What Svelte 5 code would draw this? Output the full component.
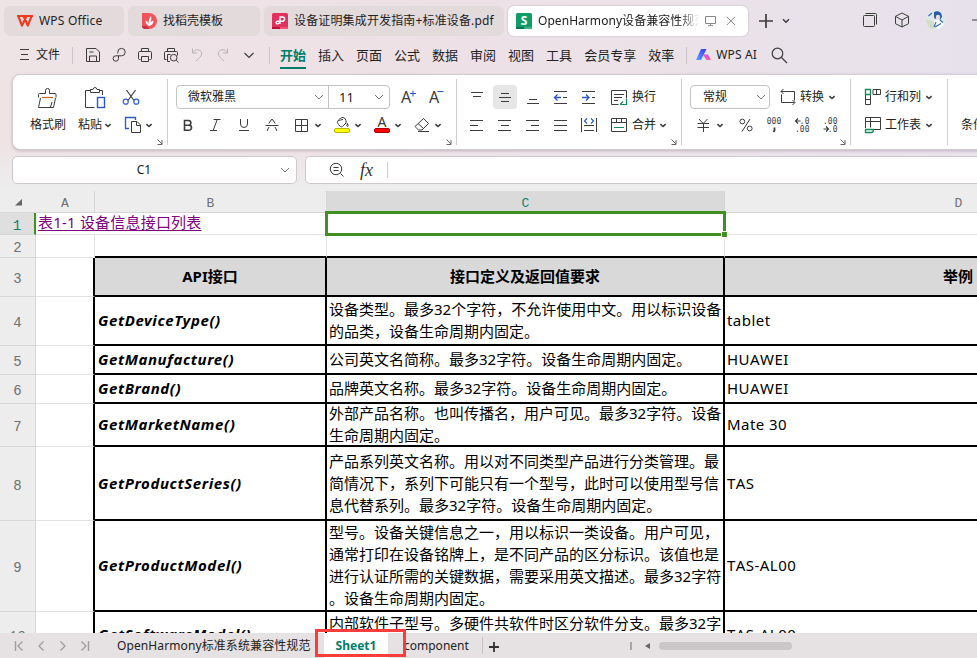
<script>
  const menus = ['插入', '页面', '公式', '数据', '审阅', '视图', '工具', '会员专享', '效率'];

  const rows = [
    { n: 4, api: 'GetDeviceType()', def: ['设备类型。最多32个字符，不允许使用中文。用以标识设备', '的品类，设备生命周期内固定。'], ex: 'tablet' },
    { n: 5, api: 'GetManufacture()', def: ['公司英文名简称。最多32字符。设备生命周期内固定。'], ex: 'HUAWEI' },
    { n: 6, api: 'GetBrand()', def: ['品牌英文名称。最多32字符。设备生命周期内固定。'], ex: 'HUAWEI' },
    { n: 7, api: 'GetMarketName()', def: ['外部产品名称。也叫传播名，用户可见。最多32字符。设备', '生命周期内固定。'], ex: 'Mate 30' },
    { n: 8, api: 'GetProductSeries()', def: ['产品系列英文名称。用以对不同类型产品进行分类管理。最', '简情况下，系列下可能只有一个型号，此时可以使用型号信', '息代替系列。最多32字符。设备生命周期内固定。'], ex: 'TAS' },
    { n: 9, api: 'GetProductModel()', def: ['型号。设备关键信息之一，用以标识一类设备。用户可见，', '通常打印在设备铭牌上，是不同产品的区分标识。该值也是', '进行认证所需的关键数据，需要采用英文描述。最多32字符', '。设备生命周期内固定。'], ex: 'TAS-AL00' },
    { n: 10, api: 'GetSoftwareModel()', def: ['内部软件子型号。多硬件共软件时区分软件分支。最多32字', ''], ex: 'TAS-AL00' }
  ];
</script>

{#snippet chev()}
  <svg class="chev" width="12" height="24" viewBox="0 0 12 24"><path d="M3.4 11.2 6 13.5 8.6 11.2" stroke-width="1.6" /></svg>
{/snippet}

{#snippet drop()}
  <svg class="drop" width="12" height="12" viewBox="0 0 12 12"><path d="M2 4 6 8 10 4" /></svg>
{/snippet}

{#snippet launcher()}
  <svg class="launcher" width="8" height="8" viewBox="0 0 8 8"><path d="M1.5 1.5 6 6M6 2v4.5H1.5" /></svg>
{/snippet}

<div class="app">
  <header class="titlebar">
    <div class="tab t1">
      <svg width="16" height="13" viewBox="0 0 16 13"><path d="M0 1h16M1.2 1 5 10.6 9.4 1.2M6.6 1.2 10.8 10.6 14.6 1" stroke="#f0391f" stroke-width="2.1" stroke-linejoin="round" /></svg>
      <span class="w1">WPS Office</span>
    </div>
    <div class="tab t2">
      <svg width="15" height="16" viewBox="0 0 15 16"><path d="M0 0h7a8 8 0 0 1 0 16H2l-2-2z" fill="#f0545a" stroke="none" /><path d="M0 13h5l2 3H2l-2-2z" fill="#c92f3e" stroke="none" /><path d="M7 13C4 11.500 3.600 9.500 3.600 7.500 5.500 8.500 6 9.500 6.600 11 6.400 8 7 5.500 9 3c.7 2.200.3 4-.6 6.500C9.500 8.500 10.200 8 11.600 7.800 11.300 10.500 10 12.500 7 13z" fill="#fff" stroke="none" /></svg>
      <span>找稻壳模板</span>
    </div>
    <div class="tab t3">
      <svg width="16" height="16" viewBox="0 0 16 16"><rect width="16" height="16" rx="1.5" fill="#e2315c" stroke="none" /><path d="M0 14h8v2H0z" fill="#c00f3e" stroke="none" /><path d="M8 14h8v2H8z" fill="#f64f78" stroke="none" /><path d="M8 11V4h2.500a2.100 2.100 0 0 1 0 4.200H5.500a1.400 1.400 0 1 0 1.400 1.400" stroke="#fff" stroke-width="1.4" /></svg>
      <span class="w3">设备证明集成开发指南+标准设备.pdf</span>
    </div>
    <div class="tab t4">
      <svg width="16" height="16" viewBox="0 0 16 16"><rect width="16" height="16" rx="1.5" fill="#109c66" stroke="none" /><path d="M0 14h8v2H0z" fill="#06784b" stroke="none" /><path d="M8 14h8v2H8z" fill="#39b584" stroke="none" /><text x="8" y="11.700" text-anchor="middle" class="s-logo">S</text></svg>
      <span class="w4">OpenHarmony设备兼容性规范</span>
      <svg class="gray" width="14" height="12" viewBox="0 0 14 12"><path d="M1.500 1.500h10v7h-10zM4 10.700h5M6.500 8.500v2" /></svg>
      <svg class="gray close" width="10" height="10" viewBox="0 0 10 10"><path d="M.8.8 9 9M9 .8.8 9" /></svg>
    </div>
    <svg class="plus" width="14" height="14" viewBox="0 0 14 14"><path d="M7 0v14M0 7h14" stroke-width="1.7" /></svg>
    <svg class="tabmenu" width="8" height="6" viewBox="0 0 8 6"><path d="M1 1.200 4 4.200 7 1.200" stroke-width="1.5" /></svg>
    <div class="winbtns">
      <svg width="16" height="16" viewBox="0 0 16 16"><rect x="1.500" y="3.500" width="11" height="11" rx="1" /><path d="M3.500 1.500h10a1 1 0 0 1 1 1v10" /></svg>
      <svg width="16" height="16" viewBox="0 0 16 16"><path d="M8 1 14.500 4.300v7.400L8 15 1.500 11.700V4.300zM1.700 4.500 8 8l6.300-3.500M8 8v7" /></svg>
      <svg width="20" height="20" viewBox="0 0 20 20"><circle cx="10" cy="10" r="10" fill="#dfe9ec" stroke="none" /><path d="M.3 9a9.800 9.800 0 0 0 7 10.500l2-7z" fill="#d3dcc4" stroke="none" /><path d="M8 2c4-2 8 0 8 5l-2 3-1-3-4 2-1-2z" fill="#2b5ca5" stroke="none" /><circle cx="12" cy="7" r="2.200" fill="#f0dfd8" stroke="none" /><path d="M8 11l4-1 5 2 1 3-5 4-5-2z" fill="#fafcff" stroke="none" /><path d="M2.500 6 6 3M9 17l6-3.500M14 10l3 2.500M10 12l-2 5" stroke="#3d6fae" stroke-width="1.2" /></svg>
    </div>
    <svg class="min" width="5" height="2" viewBox="0 0 5 2"><path d="M0 1h5" /></svg>
  </header>

  <nav class="menubar">
    <svg class="burger" width="10" height="12" viewBox="0 0 10 12"><path d="M0 .5h9M1 5.500h7M0 10.500h9" /></svg>
    <span class="file">文件</span>
    <i class="vsep s1"></i>
    <div class="quick">
      <svg width="16" height="16" viewBox="0 0 16 16"><path d="M14.500 14.500h-13v-13h9.500l3.500 3.500zM4.500 14v-5h7v5M4.500 5h4" /></svg>
      <svg width="16" height="16" viewBox="0 0 16 16"><path d="M7.500 11.500a2.700 2.700 0 1 1-2.700-2.700h5.700a3.700 3.700 0 1 0-3.700-3.700v1.400M7.500 11.500V9" /></svg>
      <svg width="16" height="16" viewBox="0 0 16 16"><path d="M4.500 4.500v-3h7v3M3.500 12.500h-1a1 1 0 0 1-1-1v-6a1 1 0 0 1 1-1h11a1 1 0 0 1 1 1v6a1 1 0 0 1-1 1h-1M4.500 9.500h7v5h-7z" /></svg>
      <svg width="16" height="16" viewBox="0 0 16 16"><path d="M4.500 4.500v-3h7v3M3.500 12.500h-2v-7a1 1 0 0 1 1-1h11a1 1 0 0 1 1 1v3M4.500 14.500v-7h3M7 14.500H4.500M13.200 13.200l2.300 2.300" /><circle cx="10.700" cy="10.700" r="3.300" /></svg>
      <svg class="faint" width="16" height="16" viewBox="0 0 16 16"><path d="M3.500 1.500v4.500H8M3.500 6C5.500 2 10 2 12 4.500c2 3-1 6-5 9.500" /></svg>
      <svg class="faint" width="16" height="16" viewBox="0 0 16 16"><path d="M12.500 1.500v4.500H8M12.500 6C10.500 2 6 2 4 4.500c-2 3 1 6 5 9.500" /></svg>
      <svg width="16" height="16" viewBox="0 0 16 16"><path d="M3.500 6 8 10.500l4.500-4.500" stroke-width="1.200" /></svg>
    </div>
    <i class="vsep s2"></i>
    <div class="menus">
      <span class="on">开始</span>
      {#each menus as m}<span>{m}</span>{/each}
    </div>
    <i class="vsep s3"></i>
    <svg class="ai" width="15" height="12" viewBox="0 0 15 12">
      <defs>
        <linearGradient id="aiBlue" x1="0" y1="1" x2="1" y2="0"><stop offset="0" stop-color="#4ea8ff" /><stop offset="1" stop-color="#3a35f5" /></linearGradient>
        <linearGradient id="aiPink" x1="0" y1="0" x2="1" y2="1"><stop offset="0" stop-color="#d04bf5" /><stop offset="1" stop-color="#ff5f90" /></linearGradient>
      </defs>
      <path d="M0 11 5 0h5.500L5 11z" fill="url(#aiBlue)" stroke="none" /><path d="M7 5.500h5l3 5.500h-4.500z" fill="url(#aiPink)" stroke="none" />
    </svg>
    <span class="aitext">WPS AI</span>
    <svg class="find" width="17" height="17" viewBox="0 0 17 17"><circle cx="6.500" cy="6.500" r="5.300" stroke-width="1.2" /><path d="M10.500 10.500 16 16" stroke-width="1.200" /></svg>
  </nav>

  <section class="ribbon">
    <div class="group g1">
      <div class="row clip-a">
        <svg width="24" height="24" viewBox="0 0 24 24"><path d="M5.500 13l-2 9.500h15l2-9.500M3.500 12.500V9.500q0-1 1-1h6V5.500a2 2 0 0 1 4 0v3h5.500q1 0 1 1v3M15.500 22l1.500-5" /><path d="M7 12.500h11" stroke="#c8641e" stroke-width="1.200" /></svg>
        <svg width="24" height="24" viewBox="0 0 24 24"><path d="M7 5.500H2.500v17h9M17 5.500h2.500V10M7.500 7.500v-3H10q.3-2 2-2t2 2h2.500v3z" /><rect x="14.500" y="12.500" width="7" height="10" stroke="#2b57c9" stroke-width="1.400" /></svg>
        <svg width="24" height="24" viewBox="0 0 24 24"><path d="M7.500 5 15 15.500M16.500 5 9 15.500" stroke-width="1.200" /><circle cx="6.700" cy="16.700" r="2.500" stroke="#2f5fe0" stroke-width="1.200" /><circle cx="17.300" cy="16.700" r="2.500" stroke="#2f5fe0" stroke-width="1.200" /></svg>
      </div>
      <div class="row clip-b">
        <span>格式刷</span><span>粘贴</span>{@render chev()}
        <svg width="24" height="24" viewBox="0 0 24 24"><path d="M8 15.500H4.500v-11h10V7" stroke="#2b57c9" stroke-width="1.300" /><path d="M10.500 8.500h5.500l3.500 3.500v7.500h-9zM15.500 8.500v4h4" /></svg>
        {@render chev()}
      </div>
      {@render launcher()}
    </div>

    <div class="group g2">
      <div class="row font-a">
        <div class="select">
          <span class="family">微软雅黑</span>{@render drop()}
          <span class="size">11</span>{@render drop()}
        </div>
        <svg width="24" height="24" viewBox="0 0 24 24"><text x="9" y="18" class="aa" text-anchor="middle">A</text><path d="M13 8.500h6M16 5.500v6" stroke="#2b57c9" /></svg>
        <svg width="24" height="24" viewBox="0 0 24 24"><text x="9" y="18" class="aa" text-anchor="middle">A</text><path d="M12.500 6.500h6" stroke="#2b57c9" /></svg>
      </div>
      <div class="row font-b">
        <svg width="24" height="24" viewBox="0 0 24 24"><path d="M8.500 7.500h4a2.300 2.300 0 0 1 0 4.700h-4zM8.500 12.200h4.500a2.500 2.500 0 0 1 0 5h-4.500z" stroke-width="1.600" /></svg>
        <svg width="24" height="24" viewBox="0 0 24 24"><path d="M10.500 6.500h7M7 17.500h7M14.200 6.500l-4 11" /></svg>
        <svg width="24" height="24" viewBox="0 0 24 24"><path d="M8.500 6v5q0 3.500 3.500 3.500t3.500-3.500V6M7 17.500h10" /></svg>
        <svg width="24" height="24" viewBox="0 0 24 24"><path d="M8.700 10.500 12 6l3.300 4.500M5.500 12.500h13M9 14l-2 4M15 14l2 4" /></svg>
        <svg width="24" height="24" viewBox="0 0 24 24"><path d="M5.500 6.500h12v12h-12zM11.500 6.500v12M5.500 12.500h12" /></svg>
        {@render chev()}
        <svg width="24" height="24" viewBox="0 0 24 24"><path d="M9 6.500q1-2 4-2 2.500.5 3 3v3M13 6.500l-5 1q-1.500 2 .5 4l2 2q1 .8 2 0l3.500-3.500M17.500 10.500q-1.500 3 0 3 1.500 0 0-3" /><rect x="4.500" y="15.500" width="15" height="4" rx="1.500" fill="#ff0" stroke="#b8b800" /></svg>
        {@render chev()}
        <svg width="24" height="24" viewBox="0 0 24 24"><text x="12" y="13.500" class="aa small" text-anchor="middle">A</text><rect x="4.500" y="15.500" width="15" height="4" rx="1.500" fill="#f00" stroke="#b00000" /></svg>
        {@render chev()}
        <svg width="24" height="24" viewBox="0 0 24 24"><path d="M13.500 5.500 18.500 10.500l-6.500 6.500H8.500L5 13.500zM8 10.500l5.500 5M8 18.500h11" /></svg>
        {@render chev()}
      </div>
      {@render launcher()}
    </div>

    <div class="group g3">
      <div class="row align">
        <svg width="24" height="24" viewBox="0 0 24 24"><path d="M6 7.500h12M8 11.500h8" /></svg>
        <span class="pressed"><svg width="24" height="24" viewBox="0 0 24 24"><path d="M8 8.500h8M6 12.500h12M8 16.500h8" /></svg></span>
        <svg width="24" height="24" viewBox="0 0 24 24"><path d="M8 14.500h8M6 18.500h12" /></svg>
        <svg width="24" height="24" viewBox="0 0 24 24"><path d="M5 6.500h13M14 12.500h4M5 18.500h13" /><path d="M5.500 12.500h6.500M8.500 9.500l-3 3 3 3" stroke="#2b57c9" stroke-width="1.300" /></svg>
        <svg width="24" height="24" viewBox="0 0 24 24"><path d="M5 6.500h13M15 12.500h3M5 18.500h13" /><path d="M5 12.500h7M9 9.500l3 3-3 3" stroke="#2b57c9" stroke-width="1.300" /></svg>
        <svg width="24" height="24" viewBox="0 0 24 24"><path d="M11.500 19.500h-7v-14h15v8M7 9.500h10M7 12.500h8M7 15.500h4" /><path d="M19.500 14v5.500h-6M16 16.500l-3 3" stroke="#108a58" stroke-width="1.200" /></svg>
        <span>换行</span>
      </div>
      <div class="row align">
        <svg width="24" height="24" viewBox="0 0 24 24"><path d="M5 7.500h13M5 12.500h8M5 17.500h13" /></svg>
        <svg width="24" height="24" viewBox="0 0 24 24"><path d="M5 7.500h13M8 12.500h8M5 17.500h13" /></svg>
        <svg width="24" height="24" viewBox="0 0 24 24"><path d="M5 7.500h13M10 12.500h8M5 17.500h13" /></svg>
        <svg width="24" height="24" viewBox="0 0 24 24"><path d="M5 7.500h13M5 12.500h13M5 17.500h13" /></svg>
        <svg width="24" height="24" viewBox="0 0 24 24"><path d="M4.500 5v14M19.500 5v14M7 12.500h10M7 17.500h10" /><path d="M10 5.500 7.500 8l2.500 2.500M14 5.500 16.500 8 14 10.500" stroke="#2b57c9" stroke-width="1.200" /></svg>
        <svg width="24" height="24" viewBox="0 0 24 24"><path d="M4.500 5.500h15v13h-15zM4.500 9.500h15M9.500 5.500v4M14.500 5.500v4" /><path d="M7 14.500h10" stroke="#108a58" /></svg>
        <span>合并</span>{@render chev()}
      </div>
      {@render launcher()}
    </div>

    <div class="group g4">
      <div class="row num-a">
        <div class="select mini"><span>常规</span>{@render drop()}</div>
        <svg width="24" height="24" viewBox="0 0 24 24"><path d="M7.500 4 5 6.500 7.500 9M5 6.500h13.500v9M5.500 9.500V17.500h13M16.500 15l2.500 2.500-2.500 2.500" /></svg>
        <span>转换</span>{@render chev()}
      </div>
      <div class="row num-b">
        <svg width="24" height="24" viewBox="0 0 24 24"><path d="M8 6l4.200 4.500L16.500 6M6.500 10.500h11.500M6.500 14.500h11.500M12.500 10.500V19" /></svg>
        {@render chev()}
        <svg width="24" height="24" viewBox="0 0 24 24"><circle cx="8.300" cy="8.500" r="2.400" /><circle cx="15.700" cy="15.500" r="2.400" /><path d="M16 6 8 18.500" /></svg>
        <svg width="24" height="24" viewBox="0 0 24 24"><text x="12" y="10.500" class="num" text-anchor="middle">000</text><path d="M12.500 14.500v3l-1 1.500" stroke-width="1.800" /></svg>
        <svg width="24" height="24" viewBox="0 0 24 24"><text x="19.500" y="10.500" class="num" text-anchor="end">.0</text><text x="19.500" y="18.500" class="num" text-anchor="end">.00</text><path d="M5.500 8h5M8 5.500 5.500 8 8 10.500" stroke-width="1.200" /></svg>
        <svg width="24" height="24" viewBox="0 0 24 24"><text x="19.500" y="10.500" class="num" text-anchor="end">.00</text><text x="19.500" y="18.500" class="num" text-anchor="end">.0</text><path d="M5.500 16h5M8 13.500l2.500 2.500L8 18.500" stroke-width="1.200" /></svg>
      </div>
      {@render launcher()}
    </div>

    <div class="group g5">
      <div class="row cells">
        <svg width="24" height="24" viewBox="0 0 24 24"><path d="M12 4.500h7.500v5H12zM15.500 4.500v5M4.500 14.500h5v5h-5zM4.500 10v5M9.500 10v5" /><path d="M4.500 4.500h5v5h-5z" stroke="#108a58" stroke-width="1.300" /></svg>
        <span>行和列</span>{@render chev()}
      </div>
      <div class="row cells">
        <svg width="24" height="24" viewBox="0 0 24 24"><path d="M4.500 15V4.500h15v12H13M4.500 8.500h15M9.500 4.500v10" /><path d="M4.500 16.500h8q0 3.000-2 3h-6z" stroke="#108a58" stroke-width="1.300" /></svg>
        <span>工作表</span>{@render chev()}
      </div>
    </div>

    <div class="group g6">
      <div class="row"></div>
      <div class="row"><span>条件格式</span></div>
    </div>
  </section>

  <section class="formula">
    <div class="box name"><span>C1</span>{@render drop()}</div>
    <div class="box fx">
      <svg width="16" height="16" viewBox="0 0 16 16"><circle cx="7" cy="7" r="5.700" /><path d="M4.500 5.500h5M4.500 8.500h5M11.500 11.500 14.500 14.500" /></svg>
      <em>fx</em>
      <i></i>
    </div>
  </section>

  <section class="sheet">
    <div class="line heads">
      <div class="corner"><svg width="7" height="7" viewBox="0 0 7 7"><path d="M7 0v6.500H0z" fill="#666" stroke="none" /></svg></div>
      <div>A</div><div>B</div><div class="cur">C</div><div>D</div>
    </div>
    <div class="line r1">
      <div class="no cur">1</div><div class="linkcell"><a href="#list">表1-1 设备信息接口列表</a></div>
      <div class="c1"><div class="selection"><b></b></div></div><div></div>
    </div>
    <div class="line r2"><div class="no">2</div><div></div><div></div><div></div><div></div></div>
    <div class="line tbl th r3"><div class="no">3</div><div></div><div>API接口</div><div>接口定义及返回值要求</div><div>举例</div></div>
    {#each rows as r}
      <div class="line tbl r{r.n}">
        <div class="no">{r.n}</div><div></div>
        <div class="api">{r.api}</div>
        <div class="def">{#each r.def as l}<p>{l}</p>{/each}</div>
        <div class="ex">{r.ex}</div>
      </div>
    {/each}
  </section>

  <footer class="tabs">
    <div class="nav">
      <svg width="12" height="12" viewBox="0 0 12 12"><path d="M2.500 1v10M9.500 1.500 5 6l4.500 4.500" /></svg>
      <svg width="12" height="12" viewBox="0 0 12 12"><path d="M8.500 1.500 4 6l4.500 4.500" /></svg>
      <svg width="12" height="12" viewBox="0 0 12 12"><path d="M3.500 1.500 8 6l-4.500 4.500" /></svg>
      <svg width="12" height="12" viewBox="0 0 12 12"><path d="M9.500 1v10M2.500 1.500 7 6l-4.500 4.500" /></svg>
    </div>
    <span class="st first">OpenHarmony标准系统兼容性规范</span>
    <span class="st active">Sheet1<b class="mark"></b></span>
    <span class="st third">component</span>
    <svg class="add" width="10" height="10" viewBox="0 0 10 10"><path d="M5 0v10M0 5h10" stroke="#333" stroke-width="1.8" /></svg>
    <div class="scroll">
      <i></i>
      <svg width="5" height="6" viewBox="0 0 5 6"><path d="M5 0v6L0 3z" fill="#666" stroke="none" /></svg>
      <b></b>
    </div>
  </footer>
</div>

<style>
  :global(body) { margin: 0; overflow: hidden; }
  .app {
    width: 977px; height: 658px; overflow: hidden; display: flex; flex-direction: column;
    background: linear-gradient(180deg, transparent 150px, #ededed 188px), linear-gradient(90deg, #eee4e6 0, #eee1e6 40%, #ebe2e8 70%, #e7e1ec 100%);
    font: 12px/16px "Noto Sans", "Noto Sans CJK SC", sans-serif; color: #222;
  }
  svg { display: block; flex: none; fill: none; stroke: #3c3c3c; stroke-width: 1; }
  svg text { stroke: none; fill: #3c3c3c; }
  span { white-space: nowrap; }

  .titlebar { height: 37px; display: flex; align-items: flex-start; padding: 6px 0 0 4px; box-sizing: border-box; flex: none; }
  .tab { height: 30px; box-sizing: border-box; margin-right: 4px; border-radius: 6px; background: #e3dadc; display: flex; align-items: center; }
  .t1 { width: 120px; padding-left: 13px; gap: 6px; }
  .w1 { letter-spacing: .2px; }
  .t2 { width: 132px; padding-left: 14px; gap: 6px; }
  .t3 { width: 240px; padding-left: 8px; gap: 6px; }
  .w3 { letter-spacing: .15px; }
  .t4 { width: 240px; padding-left: 8px; gap: 6px; background: #fff; box-shadow: 0 0 2px #b9b0b4; }
  .w4 { width: 161px; overflow: hidden; letter-spacing: .05px; -webkit-mask-image: linear-gradient(90deg, #000 142px, transparent 161px); mask-image: linear-gradient(90deg, #000 142px, transparent 161px); }
  .s-logo { font: 700 12px "Noto Sans", sans-serif; fill: #fff; }
  .gray { stroke: #888; }
  .close { margin-left: 2px; }
  .t4 .gray { position: relative; left: -1px; }
  .plus { margin: 8px 0 0 7px; }
  .tabmenu { margin: 12px 0 0 9px; }
  .winbtns { display: flex; align-items: center; gap: 16px; margin: 4px 0 0 72px; }
  .min { margin: 13px 0 0 26px; }

  .menubar { height: 36px; display: flex; align-items: center; flex: none; }
  .burger { margin-left: 20px; }
  .file { margin-left: 6px; width: 24px; }
  .vsep { width: 1px; height: 17px; background: #cdc5c8; flex: none; }
  .s1 { margin-left: 12px; }
  .quick { display: flex; gap: 10px; margin-left: 12px; }
  .faint { stroke: #b9b2b5; }
  .s2 { margin-left: 12px; }
  .menus { display: flex; gap: 12px; margin-left: 10px; font-size: 13px; line-height: 20px; }
  .menus span { height: 25px; padding-top: 1px; box-sizing: border-box; margin-top: 3px; }
  .menus .on { color: #007e6b; font-weight: 700; border-bottom: 2px solid #007e6b; }
  .s3 { margin-left: 12px; }
  .ai { margin-left: 9px; }
  .aitext { margin-left: 5px; width: 42px; letter-spacing: .15px; }
  .find { margin-left: 13px; }

  .ribbon {
    height: 76px; box-sizing: border-box; margin: 1px 0 0 12px; width: 980px; flex: none; display: flex; padding-top: 4px;
    background: #fff; border: 1px solid #d3ccd0; border-radius: 8px 0 0 8px; box-shadow: 0 1px 3px rgba(90, 70, 90, .28);
  }
  .group { height: 66px; box-sizing: border-box; border-right: 1px solid #cecece; padding-top: 6px; display: flex; flex-direction: column; flex: none; }
  .g1 { width: 155px; } .g2 { width: 289px; } .g3 { width: 225px; } .g4 { width: 169px; } .g5 { width: 97px; }
  .g6 { border: 0; padding-left: 13px; }
  .row { display: grid; height: 24px; margin-bottom: 4px; align-items: center; flex: none; }
  .launcher { align-self: flex-end; margin: -3px 3px 0 0; stroke: #666; }
  .clip-a { padding-left: 22px; grid-template-columns: 48px 36px 24px; }
  .clip-b { padding-left: 17px; grid-template-columns: 48px 24px 19px 22px 12px; }
  .font-a { padding-left: 8px; grid-template-columns: 221px 28px 24px; }
  .font-b { padding-left: 8px; grid-template-columns: 27px 29px 28px 30px 22px 18px 22px 18px 22px 18px 22px 12px; }
  .align { padding-left: 8px; grid-template-columns: 28px 28px 28px 28px 30px 25px 25px 12px; }
  .num-a { padding-left: 8px; grid-template-columns: 86px 24px 26px 12px; }
  .num-b { padding-left: 9px; grid-template-columns: 23px 20px 28px 28px 28px 24px; }
  .cells { padding-left: 10px; grid-template-columns: 24px 38px 12px; }
  .pressed { width: 24px; height: 24px; background: #e6e6e6; border-radius: 4px; }
  .select { width: 214px; height: 24px; box-sizing: border-box; border: 1px solid #c3c3c3; border-radius: 4px; display: flex; align-items: center; padding-left: 11px; }
  .drop { stroke: #777; }
  .family { width: 125px; }
  .size { font-size: 13px; border-left: 1px solid #c3c3c3; line-height: 22px; margin-left: 3px; padding-left: 10px; width: 34px; }
  .mini { width: 80px; padding-left: 12px; }
  .mini span { width: 52px; }
  .aa { font: 16px "Noto Sans", sans-serif; }
  .small { font-size: 14px; }
  .num { font: 8px "DejaVu Sans Mono", monospace; }

  .formula { display: flex; gap: 8px; margin: 6px 0 0 12px; height: 28px; flex: none; }
  .box { box-sizing: border-box; height: 28px; background: #fff; border: 1px solid #cfc8cc; border-radius: 5px; display: flex; align-items: center; flex: none; }
  .name { width: 285px; padding-right: 5px; }
  .name span { flex: 1; text-align: center; padding-right: 4px; }
  .fx { width: 680px; border-right: 0; border-radius: 5px 0 0 5px; padding-left: 23px; }
  .fx em { font: italic 18px "Liberation Serif", serif; margin-left: 15px; width: 17px; color: #333; }
  .fx i { width: 1px; height: 16px; background: #ccc; margin-left: 10px; }

  .sheet { margin-top: 7px; height: 442px; flex: none; overflow: hidden; background: #fff; }
  .line { display: grid; grid-template-columns: 36px 59px 232px 398px 468px; grid-template-rows: 100%; width: 1193px; }
  .line > div { box-sizing: border-box; border-right: 1px solid #e2e2e2; border-bottom: 1px solid #e2e2e2; min-width: 0; }
  .heads { height: 22px; background: #ededed; }
  .heads > div { border-color: #d6d6d6; display: flex; align-items: center; justify-content: center; padding-top: 4px; color: #707070; font: 13px "Liberation Mono", monospace; }
  .heads > .corner { justify-content: flex-end; padding: 1px 13px 0 0; border-right-color: #ededed; }
  .heads > .cur { background: #dadada; color: #0a8374; }
  .line > .no { background: #ededed; border-color: #d6d6d6; color: #707070; font: 14px "Liberation Mono", monospace; display: flex; align-items: center; justify-content: center; padding-top: 4px; }
  .line > .no.cur { background: #dfdfdf; color: #0a8374; border-right: 2px solid #3f8f22; }
  .r1 { height: 22px; }
  .line > .linkcell { grid-column: span 2; padding-left: 2px; }
  a { color: #800080; font-size: 15px; line-height: 20px; letter-spacing: .2px; display: inline-block; height: 20px; text-underline-offset: 2px; white-space: nowrap; position: relative; top: -1px; }
  .c1 { position: relative; }
  .selection { position: absolute; left: -2px; top: -2px; width: 401px; height: 25px; box-sizing: border-box; border: 3px solid #3f8f22; z-index: 2; }
  .selection b { position: absolute; right: -5px; bottom: -5px; width: 5px; height: 5px; background: #3f8f22; border: 1px solid #fff; }
  .r2 { height: 23px; }
  .r2 > div:nth-child(n + 3) { border-bottom: 2px solid #000; }
  .tbl > div:nth-child(2) { border-right: 2px solid #000; }
  .tbl > div:nth-child(n + 3) { border-right: 2px solid #000; border-bottom: 2px solid #000; display: flex; align-items: center; color: #000; font-size: 15px; line-height: 22px; white-space: pre; padding-bottom: 1px; }
  .th > div:nth-child(n + 3) { background: #d9d9d9; justify-content: center; font-weight: 700; }
  .line.tbl > .api:nth-child(3) { font-weight: 700; font-style: italic; padding-left: 3px; letter-spacing: .6px; }
  .line.tbl > .def:nth-child(4) { flex-direction: column; align-items: flex-start; justify-content: center; padding-left: 2px; }
  .line.tbl > .ex:nth-child(5) { padding-left: 2px; letter-spacing: .45px; font-kerning: none; }
  p { margin: 0; height: 22px; flex: none; }
  .r3 { height: 39px; } .r4 { height: 49px; } .r5, .r6 { height: 29px; } .r7 { height: 43px; }
  .r8 { height: 74px; } .r9 { height: 91px; } .r10 { height: 46px; }

  .tabs { height: 25px; flex: none; background: #e6e1e3; display: flex; align-items: center; position: relative; }
  .nav { display: flex; margin-left: 13px; gap: 10px; width: 78px; }
  .nav svg { stroke: #a39da0; stroke-width: 1.4; }
  .st { line-height: 26px; height: 25px; box-sizing: border-box; }
  .first { margin-left: 26px; width: 207px; letter-spacing: .1px; }
  .active { width: 64px; background: #fff; color: #007e6b; font-weight: 700; text-align: center; position: relative; }
  .mark { position: absolute; left: -9px; top: -4px; width: 91px; height: 28px; box-sizing: border-box; border: 3px solid #f93c3c; z-index: 3; }
  .third { margin-left: 16px; width: 79px; height: 17px; line-height: 18px; border-right: 1px solid #c8c2c4; }
  .add { margin: 2px 0 0 6px; }
  .scroll { display: flex; align-items: center; margin-left: 131px; }
  .scroll i { width: 2px; height: 8px; background: #aaa5a7; }
  .scroll svg { margin-left: 13px; }
  .scroll b { width: 133px; height: 8px; border-radius: 4px; background: #c9c7c8; margin-left: 9px; }
</style>
